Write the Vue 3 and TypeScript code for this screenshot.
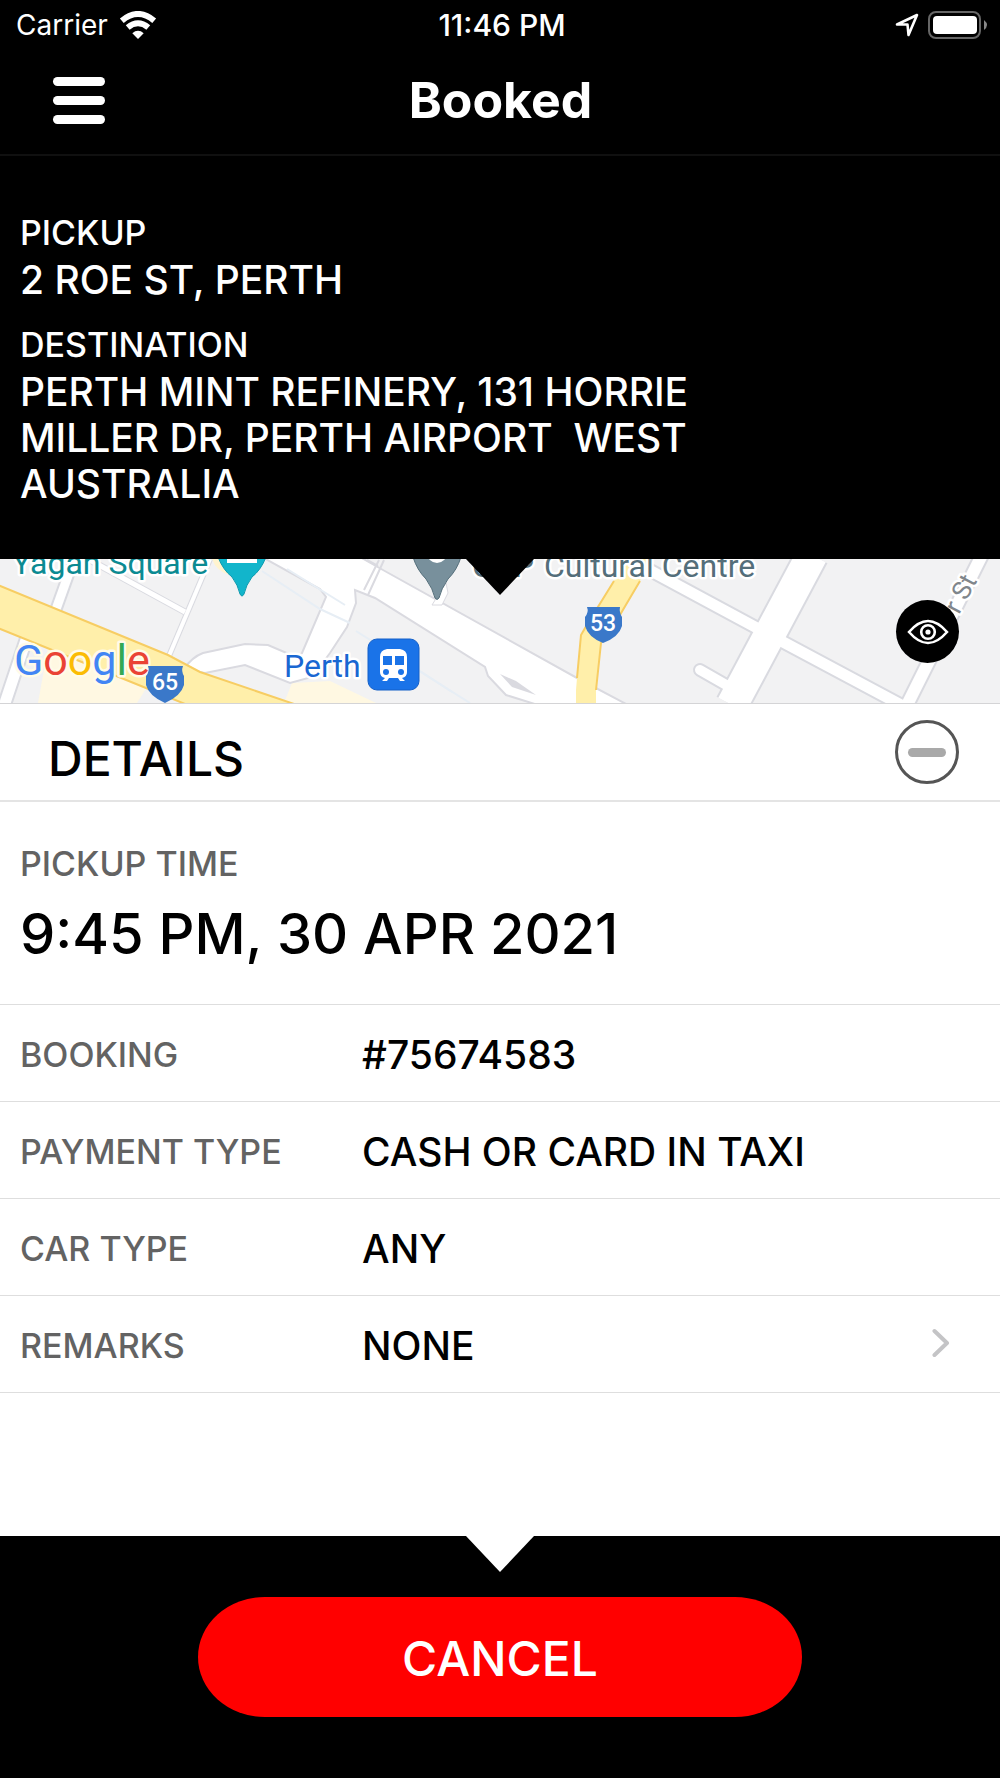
<script setup lang="ts">
import { ref } from 'vue'

interface DetailRow {
  label: string
  value: string
}

const rows: DetailRow[] = [
  { label: 'BOOKING', value: '#75674583' },
  { label: 'PAYMENT TYPE', value: 'CASH OR CARD IN TAXI' },
  { label: 'CAR TYPE', value: 'ANY' },
]

const expanded = ref(true)
</script>

<template>
  <div class="screen">
    <header class="top">
      <div class="status">
        <div class="status-left">
          <span class="carrier">Carrier</span>
          <svg class="wifi" width="38" height="28" viewBox="0 0 38 28" aria-hidden="true">
            <g fill="none" stroke="#fff" stroke-width="6">
              <path d="M2.800 9.700Q19-3.700 35.200 9.700" />
              <path d="M8.700 16.500Q19 8 29.300 16.500" />
            </g>
            <path d="M13.300 22.200Q19 17.300 24.700 22.200L19 28Z" fill="#fff" />
          </svg>
        </div>
        <time class="clock">11:46 PM</time>
        <div class="status-right">
          <svg width="24" height="24" viewBox="0 0 24 24" aria-hidden="true">
            <path d="M2 11.500L22 2L13.500 22L12.500 11.500Z" fill="none" stroke="#fff" stroke-width="2.600" stroke-linejoin="round" />
          </svg>
          <svg width="60" height="28" viewBox="0 0 60 28" aria-hidden="true">
            <rect x="1" y="1" width="51" height="26" rx="7" fill="none" stroke="#666" stroke-width="2" />
            <rect x="5" y="5" width="44" height="18" rx="4" fill="#fff" />
            <path d="M56 9Q62 14 56 19Z" fill="#888" />
          </svg>
        </div>
      </div>
      <div class="nav">
        <button class="menu" type="button" aria-label="Menu">
          <span class="bar"></span>
          <span class="bar"></span>
          <span class="bar"></span>
        </button>
        <h1 class="title">Booked</h1>
      </div>
    </header>

    <section class="trip">
      <p class="label light">PICKUP</p>
      <p class="value light">2 ROE ST, PERTH</p>
      <p class="label light next">DESTINATION</p>
      <p class="value light address">PERTH MINT REFINERY, 131 HORRIE MILLER DR, PERTH AIRPORT&nbsp; WEST AUSTRALIA</p>
    </section>

    <section class="map">
      <svg class="map-art" viewBox="0 0 1000 144" preserveAspectRatio="xMidYMid slice" role="img" aria-label="Map of Perth">
        <rect width="1000" height="144" fill="#f2f2f3" />
        <!-- parks and shopping areas -->
        <path d="M48 88L38 144H137L152 120Z" fill="#fff8e2" />
        <path d="M212 0H232L230 16Q216 12 212 0Z" fill="#fff4cf" />
        <path d="M292 124L330 122L376 144H284Z" fill="#fff8e2" />
        <!-- railway land -->
        <g fill="#fff" stroke="#dadae0" stroke-width="2">
          <path d="M262 -2L320 30L326 38L302 94L296 98L268 86L245 85L203 94Q192 98 184 110L205 114L245 106L290 124L312 118L330 94L347 68L356 44L355 31L375 39L485 108L488 117L506 136L538 146H628L577 119L383 11L360 -2Z" />
        </g>
        <path d="M367 1L378 7M384 1L368 36M379 1L364 31" fill="none" stroke="#dadae0" stroke-width="2" />
        <path d="M500 115L516 122L536 136L512 128Z" fill="#dadae0" />
        <path d="M432 46L437 38L446 24L448 34L442 46Z" fill="#fff" stroke="#dadae0" />
        <g fill="none" stroke="#e7eef5" stroke-width="2">
          <path d="M262 12L320 50L350 64" />
          <path d="M287 10L345 46" />
          <path d="M356 72L470 144" />
          <path d="M420 112L452 133" />
        </g>
        <!-- minor streets: casing under the white surface -->
        <g fill="none" stroke="#d9dae0" stroke-linejoin="round">
          <path d="M74 0L54 56" stroke-width="13" />
          <path d="M88 0L185 53" stroke-width="7" />
          <path d="M210 0L166 104" stroke-width="6" />
          <path d="M27 78L3 150" stroke-width="15" />
          <path d="M640 6L757 69L905 148" stroke-width="15" />
          <path d="M982 -4L905 150" stroke-width="16" />
          <path d="M700 111L728 127" stroke-width="14" stroke-linecap="round" />
          <path d="M812 -4L732 146" stroke-width="35" />
        </g>
        <g fill="none" stroke="#fff" stroke-linejoin="round">
          <path d="M74 0L54 56" stroke-width="9" />
          <path d="M88 0L185 53" stroke-width="5" />
          <path d="M210 0L166 104" stroke-width="4" />
          <path d="M27 78L3 150" stroke-width="11" />
          <path d="M640 6L757 69L905 148" stroke-width="11" />
          <path d="M982 -4L905 150" stroke-width="12" />
          <path d="M700 111L728 127" stroke-width="10" stroke-linecap="round" />
          <path d="M812 -4L732 146" stroke-width="31" />
        </g>
        <!-- main roads -->
        <path d="M-2 26L168 96L200 113L300 147H190L146 129L-2 69Z" fill="#ffefaa" stroke="#f7cd63" stroke-width="2" />
        <path d="M654 -4L640 22L620 58Q603 78 601 84L596 131V150H576V131L577 119L581 76L588 64L614 22L624 -4Z" fill="#ffefaa" />
        <path d="M614 22L588 64L581 76L577 119M640 22L614 66L601 84L596 131" fill="none" stroke="#f7cd63" stroke-width="2" />
        <!-- place pins -->
        <path d="M218 -2H266Q261 11 252 18Q246 26 244 35Q242 39 240 35Q238 26 232 18Q223 11 218 -2Z" fill="#12b5cb" stroke="#0d9aae" />
        <rect x="227" y="-2" width="30" height="6" fill="#fff" />
        <path d="M413 -2H461Q457 11 448 20Q441 30 439 39Q437 42 435 39Q433 30 426 20Q417 11 413 -2Z" fill="#78909c" stroke="#546e7a" />
        <circle cx="437" cy="-6" r="10" fill="#fff" />
        <!-- place names -->
        <g class="place" font-size="32">
          <text x="12" y="15" fill="#0b8a92">Yagan Square</text>
          <text x="534" y="18" fill="#546e7a" text-anchor="end">CAP</text>
          <text x="544" y="18" fill="#546e7a">Cultural Centre</text>
        </g>
        <text class="place" x="284" y="118" font-size="32" fill="#1967d2">Perth</text>
        <text class="place" x="959" y="56" font-size="26" fill="#80868b" transform="rotate(-62 959 56)">r St</text>
        <!-- station -->
        <rect x="368" y="80" width="51" height="51" rx="9" fill="#1a73e8" stroke="#1560c8" />
        <path d="M387 90H400Q407 91 407 98V113Q407 118 402 119L405 122H400L398 119H389L387 122H382L385 119Q380 118 380 113V98Q380 91 387 90Z" fill="#fff" />
        <path d="M383 97H392V106H383ZM395 97H404V106H395Z" fill="#1a73e8" />
        <circle cx="386" cy="113" r="3" fill="#1a73e8" />
        <circle cx="401" cy="113" r="3" fill="#1a73e8" />
        <text class="google" x="14" y="116" font-size="43"><tspan fill="#4285f4">G</tspan><tspan fill="#ea4335">o</tspan><tspan fill="#fbbc04">o</tspan><tspan fill="#4285f4">g</tspan><tspan fill="#34a853">l</tspan><tspan fill="#ea4335">e</tspan></text>
        <!-- route shields -->
        <g class="shield">
          <path d="M148 107H183Q181 112 184 117V126Q181 137 165 144Q149 137 146 126V117Q150 112 148 107Z" />
          <text x="165" y="131">65</text>
          <path d="M587 48H620Q619 53 622 58V67Q619 78 603 84Q588 78 585 67V58Q589 53 587 48Z" />
          <text x="603" y="72">53</text>
        </g>
      </svg>
      <button class="eye" type="button" aria-label="Show map">
        <svg width="42" height="26" viewBox="0 0 42 26" fill="none" stroke="#fff" stroke-width="2.600" aria-hidden="true">
          <path d="M2 13Q21-9 40 13Q21 35 2 13Z" />
          <circle cx="21" cy="13" r="6.800" />
          <circle cx="21" cy="13" r="2.600" fill="#fff" stroke="none" />
        </svg>
      </button>
    </section>

    <main class="details">
      <div class="details-head">
        <h2 class="heading">DETAILS</h2>
        <button class="toggle" type="button" aria-label="Toggle details" :aria-expanded="expanded" @click="expanded = !expanded">
          <span class="minus"></span>
        </button>
      </div>
      <template v-if="expanded">
        <div class="when">
          <p class="label">PICKUP TIME</p>
          <p class="time">9:45 PM, 30 APR 2021</p>
        </div>
        <div v-for="row in rows" :key="row.label" class="row">
          <span class="label">{{ row.label }}</span>
          <span class="value">{{ row.value }}</span>
        </div>
        <button class="row" type="button">
          <span class="label">REMARKS</span>
          <span class="value">NONE</span>
          <svg class="chevron" width="18" height="30" viewBox="0 0 18 30" fill="none" stroke="#c4c4c6" stroke-width="4" stroke-linecap="round" stroke-linejoin="round" aria-hidden="true">
            <path d="M2.500 3L15 15L2.500 27" />
          </svg>
        </button>
      </template>
    </main>

    <footer class="actions">
      <button class="cancel" type="button">CANCEL</button>
    </footer>
  </div>
</template>

<style>
body {
  margin: 0;
}
</style>

<style scoped>
.screen {
  display: flex;
  flex-direction: column;
  min-height: 100vh;
  background: #fff;
  color: #000;
  font-family: Inter, "Liberation Sans", sans-serif;
  font-weight: 500;
}

button {
  margin: 0;
  padding: 0;
  border: 0;
  background: none;
  color: inherit;
  font: inherit;
  text-align: left;
  cursor: pointer;
}

h1,
h2,
p {
  margin: 0;
}

svg {
  display: block;
}

.top {
  background: #000;
  color: #fff;
  border-bottom: 2px solid #101010;
}

.status {
  display: grid;
  grid-template-columns: 1fr auto 1fr;
  align-items: center;
  height: 50px;
  padding: 0 12px 0 16px;
  font-size: 28px;
  line-height: 34px;
}

.status-left {
  display: flex;
  align-items: center;
  gap: 11px;
}

.carrier {
  font-weight: 400;
}

.clock {
  font-size: 30px;
}

.status-right {
  display: flex;
  align-items: center;
  justify-content: flex-end;
  gap: 9px;
}

.nav {
  display: grid;
  grid-template-columns: 1fr auto 1fr;
  align-items: center;
  height: 104px;
  padding: 0 52px 4px 53px;
  box-sizing: border-box;
}

.menu {
  display: flex;
  flex-direction: column;
  gap: 10px;
  width: 52px;
}

.bar {
  height: 9px;
  border-radius: 5px;
  background: #fff;
}

.title {
  font-size: 50px;
  line-height: 58px;
  font-weight: 700;
}

.trip {
  padding: 53px 20px 52px;
  background: #000;
}

.label {
  font-size: 34px;
  line-height: 48px;
  color: #636363;
}

.value {
  font-size: 39px;
  line-height: 46px;
}

.light {
  color: #fff;
}

.next {
  margin-top: 18px;
}

.address {
  max-width: 720px;
}

.map {
  position: relative;
  border-bottom: 1px solid #d4d4d6;
}

.map::before,
.actions::before {
  content: "";
  position: absolute;
  z-index: 1;
  top: 0;
  left: 50%;
  width: 68px;
  height: 36px;
  background: #000;
  clip-path: polygon(0 0, 100% 0, 50% 100%);
  transform: translateX(-50%);
}

.map-art {
  width: 100%;
  height: 144px;
}

.place,
.google,
.shield text {
  font-family: Roboto, "Liberation Sans", sans-serif;
}

.place {
  font-weight: 400;
  stroke: #fff;
  stroke-width: 5px;
  stroke-linejoin: round;
  paint-order: stroke;
}

.google {
  font-weight: 400;
  stroke: #fffbe8;
  stroke-width: 5px;
  stroke-linejoin: round;
  paint-order: stroke;
}

.shield path {
  fill: #3a78c9;
}

.shield text {
  fill: #fff;
  font-size: 23px;
  font-weight: 500;
  text-anchor: middle;
}

.eye {
  position: absolute;
  top: 41px;
  right: 41px;
  display: flex;
  align-items: center;
  justify-content: center;
  width: 63px;
  height: 63px;
  border-radius: 50%;
  background: #000;
}

.details {
  flex: 1;
}

.details-head {
  display: flex;
  align-items: center;
  justify-content: space-between;
  height: 96px;
  padding: 0 41px 0 48px;
  border-bottom: 2px solid #e4e4e4;
}

.heading {
  padding-top: 14px;
  font-size: 48px;
  line-height: 58px;
  font-weight: 500;
}

.toggle {
  display: flex;
  align-items: center;
  justify-content: center;
  box-sizing: border-box;
  width: 64px;
  height: 64px;
  border: 3px solid #555;
  border-radius: 50%;
}

.minus {
  width: 38px;
  height: 9px;
  border-radius: 5px;
  background: #a9a9a9;
}

.when {
  padding: 38px 20px 34px;
  border-bottom: 1px solid #dedede;
}

.time {
  margin-top: 10px;
  font-size: 56px;
  line-height: 72px;
}

.row {
  display: grid;
  grid-template-columns: 342px 1fr auto;
  align-items: center;
  box-sizing: border-box;
  width: 100%;
  height: 97px;
  padding: 4px 50px 0 20px;
  border-bottom: 1px solid #dedede;
}

.chevron {
  margin-bottom: 6px;
}

.actions {
  position: relative;
  display: flex;
  justify-content: center;
  padding: 61px 20px;
  background: #000;
}

.actions::before {
  background: #fff;
}

.cancel {
  box-sizing: border-box;
  width: 63%;
  height: 120px;
  padding-top: 4px;
  border-radius: 67px / 60px;
  background: #f00;
  color: #fff;
  font-size: 48px;
  line-height: 58px;
  text-align: center;
}
</style>
